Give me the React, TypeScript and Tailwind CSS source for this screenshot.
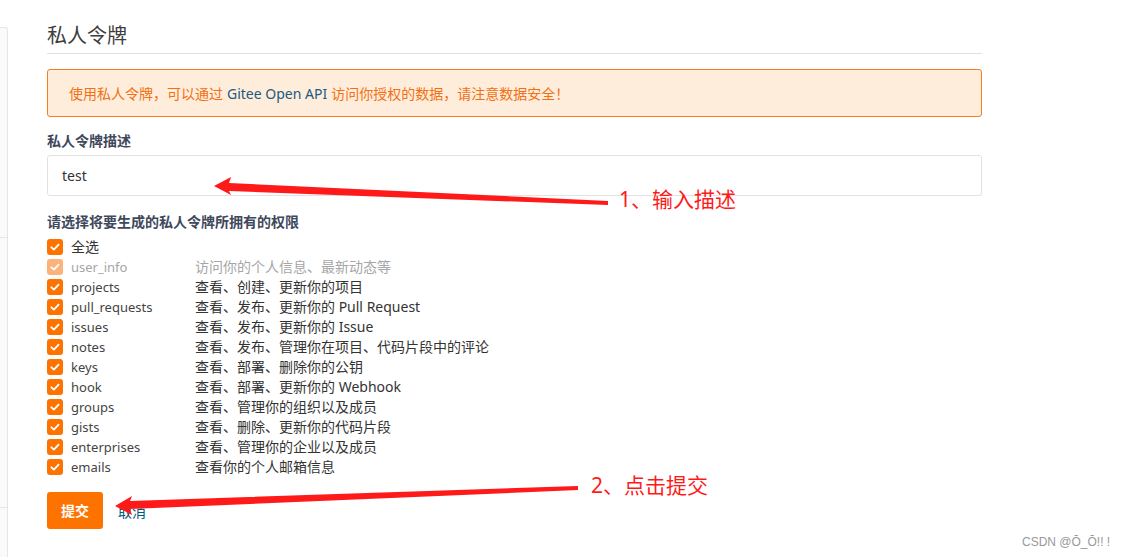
import React from 'react';

const scopes: { name: string; desc: string; disabled?: boolean }[] = [
  { name: 'user_info', desc: '访问你的个人信息、最新动态等', disabled: true },
  { name: 'projects', desc: '查看、创建、更新你的项目' },
  { name: 'pull_requests', desc: '查看、发布、更新你的 Pull Request' },
  { name: 'issues', desc: '查看、发布、更新你的 Issue' },
  { name: 'notes', desc: '查看、发布、管理你在项目、代码片段中的评论' },
  { name: 'keys', desc: '查看、部署、删除你的公钥' },
  { name: 'hook', desc: '查看、部署、更新你的 Webhook' },
  { name: 'groups', desc: '查看、管理你的组织以及成员' },
  { name: 'gists', desc: '查看、删除、更新你的代码片段' },
  { name: 'enterprises', desc: '查看、管理你的企业以及成员' },
  { name: 'emails', desc: '查看你的个人邮箱信息' },
];

const Check = ({ faded }: { faded?: boolean }) => (
  <span
    className={`flex h-4 w-4 shrink-0 items-center justify-center self-center rounded-[3px] ${
      faded ? 'bg-[#fdb27a]' : 'bg-[#fe7300]'
    }`}
  >
    <svg viewBox="0 0 16 16" className="h-3 w-3">
      <path d="M3.2 8.4 L6.5 11.4 L12.8 4.8" fill="none" stroke="#fff" strokeWidth="2.4" strokeLinecap="round" strokeLinejoin="round" />
    </svg>
  </span>
);

export default function App() {
  return (
    <div
      className="relative h-[557px] w-[1129px] overflow-hidden bg-white text-[#333]"
      style={{ fontFamily: '"Noto Sans", "Noto Sans CJK SC", sans-serif' }}
    >
      <div className="flex">
        {/* left panel edge */}
        <div className="mt-[27px] h-[540px] w-[8px] rounded-tr-[3px] border-r border-t border-[#e3e6ea] bg-[#fafafa]">
          <div className="mt-[209px] border-t border-[#e6e6e6]" />
          <div className="mt-[269px] border-t border-[#e6e6e6]" />
        </div>

        <div className="ml-[39px] w-[935px] pt-[23px]">
          <h1 className="border-b border-[#e1e1e1] pb-[5px] text-[20px] leading-[25px] text-[#3d3d3d]">私人令牌</h1>

          <div className="mt-[15px] flex h-[48px] items-center rounded-[3px] border border-[#f67f24] bg-[#ffeddc] pl-[21px] text-[14px] text-[#f26f12]">
            使用私人令牌，可以通过 <span className="mx-[4px] text-[#225a80]">Gitee Open API</span> 访问你授权的数据，请注意数据安全！
          </div>

          <div className="mt-[15px] text-[14px] font-bold leading-[18px] text-[#40485b]">私人令牌描述</div>
          <div className="mt-[5px] flex h-[41px] items-center rounded-[3px] border border-[#e2e2e2] pl-[14px] text-[14px] text-[#333]">
            test
          </div>

          <div className="mt-[17px] text-[14px] font-bold leading-[18px] text-[#40485b]">
            请选择将要生成的私人令牌所拥有的权限
          </div>

          <div className="mt-[6px] flex flex-col text-[14px]">
            <label className="flex h-[20px] items-baseline leading-[20px]">
              <Check />
              <span className="ml-[8px] text-[#333]">全选</span>
            </label>
            {scopes.map((s) => (
              <label key={s.name} className="flex h-[20px] items-baseline leading-[20px]">
                <Check faded={s.disabled} />
                <span className={`ml-[8px] w-[124px] text-[13px] ${s.disabled ? 'text-[#a6a6a6]' : 'text-[#444]'}`}>
                  {s.name}
                </span>
                <span className={s.disabled ? 'text-[#a6a6a6]' : 'text-[#333]'}>{s.desc}</span>
              </label>
            ))}
          </div>

          <div className="mt-[15px] flex items-center">
            <button className="h-[37px] w-[56px] rounded-[3px] bg-[#fe7300] text-[14px] font-bold text-white">提交</button>
            <span className="ml-[15px] mt-[2px] text-[14px] text-[#005980]">取消</span>
          </div>
        </div>
      </div>

      {/* annotations */}
      <svg className="absolute left-0 top-0" width="1129" height="557">
        <polygon points="214,186 231,177 229,183 608,201 608,205 229,191 231,195" fill="#ff1a1a" />
        <polygon points="115,506 132,496 130,501 578,486 578,490 130,509 132,515" fill="#ff1a1a" />
      </svg>
      <div className="absolute left-[619px] top-[185px] text-[21px] leading-[28px] text-[#ff1a1a]">1、输入描述</div>
      <div className="absolute left-[591px] top-[471px] text-[21px] leading-[28px] text-[#ff1a1a]">2、点击提交</div>
      <div
        className="absolute left-[1022px] top-[533px] text-[12px] text-[#999]"
        style={{ fontFamily: '"Liberation Sans", sans-serif' }}
      >
        CSDN @Ō_Ō!! !
      </div>
    </div>
  );
}
